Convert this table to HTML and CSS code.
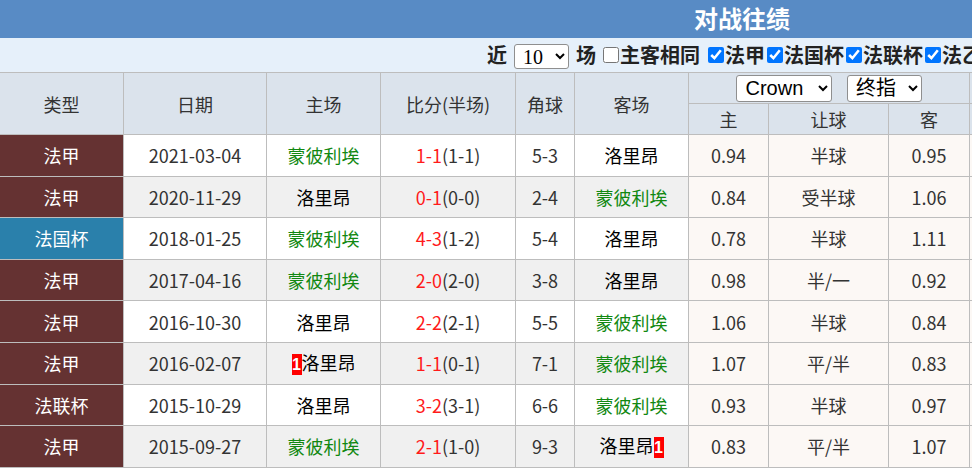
FILE: index.html
```html
<!DOCTYPE html>
<html lang="zh-CN">
<head>
<meta charset="utf-8">
<title>对战往绩</title>
<link rel="stylesheet" href="styles.css">
</head>
<body>
<div class="page">
  <div class="title-bar">对战往绩</div>
  <div class="filter-bar">
    <span class="ftxt">近</span>
    <select class="sel-num"><option>10</option></select>
    <span class="ftxt">场</span>
    <label class="chk"><input type="checkbox">主客相同</label>
    <label class="chk gap"><input type="checkbox" checked>法甲</label>
    <label class="chk"><input type="checkbox" checked>法国杯</label>
    <label class="chk"><input type="checkbox" checked>法联杯</label>
    <label class="chk"><input type="checkbox" checked>法乙</label>
  </div>
  <table class="h2h">
    <colgroup>
      <col class="c-type"><col class="c-date"><col class="c-home"><col class="c-score"><col class="c-corner"><col class="c-away">
      <col class="c-o1"><col class="c-o2"><col class="c-o3">
      <col class="c-o1"><col class="c-o2"><col class="c-o3">
    </colgroup>
    <thead>
      <tr class="hr1">
        <th rowspan="2">类型</th>
        <th rowspan="2">日期</th>
        <th rowspan="2">主场</th>
        <th rowspan="2">比分(半场)</th>
        <th rowspan="2">角球</th>
        <th rowspan="2">客场</th>
        <th colspan="3" class="selcell">
          <select class="sel-co"><option>Crown</option></select>
          <select class="sel-kind"><option>终指</option></select>
        </th>
        <th colspan="3" class="selcell">
          <select class="sel-kind"><option>终指</option></select>
        </th>
      </tr>
      <tr class="hr2">
        <th>主</th><th>让球</th><th>客</th>
        <th>大</th><th>盘口</th><th>小</th>
      </tr>
    </thead>
    <tbody>
      <tr class="odd">
        <td class="lg">法甲</td><td>2021-03-04</td><td class="g">蒙彼利埃</td>
        <td><span class="r">1-1</span>(1-1)</td><td>5-3</td><td class="b">洛里昂</td>
        <td class="o">0.94</td><td class="o">半球</td><td class="o">0.95</td>
        <td class="o">0.90</td><td class="o">2.5</td><td class="o">0.96</td>
      </tr>
      <tr class="even">
        <td class="lg">法甲</td><td>2020-11-29</td><td class="b">洛里昂</td>
        <td><span class="r">0-1</span>(0-0)</td><td>2-4</td><td class="g">蒙彼利埃</td>
        <td class="o">0.84</td><td class="o">受半球</td><td class="o">1.06</td>
        <td class="o">0.95</td><td class="o">2.5</td><td class="o">0.91</td>
      </tr>
      <tr class="odd">
        <td class="lg cup">法国杯</td><td>2018-01-25</td><td class="g">蒙彼利埃</td>
        <td><span class="r">4-3</span>(1-2)</td><td>5-4</td><td class="b">洛里昂</td>
        <td class="o">0.78</td><td class="o">半球</td><td class="o">1.11</td>
        <td class="o">0.88</td><td class="o">2.5</td><td class="o">0.98</td>
      </tr>
      <tr class="even">
        <td class="lg">法甲</td><td>2017-04-16</td><td class="g">蒙彼利埃</td>
        <td><span class="r">2-0</span>(2-0)</td><td>3-8</td><td class="b">洛里昂</td>
        <td class="o">0.98</td><td class="o">半/一</td><td class="o">0.92</td>
        <td class="o">0.93</td><td class="o">2.5</td><td class="o">0.93</td>
      </tr>
      <tr class="odd">
        <td class="lg">法甲</td><td>2016-10-30</td><td class="b">洛里昂</td>
        <td><span class="r">2-2</span>(2-1)</td><td>5-5</td><td class="g">蒙彼利埃</td>
        <td class="o">1.06</td><td class="o">半球</td><td class="o">0.84</td>
        <td class="o">0.86</td><td class="o">2.5</td><td class="o">1.00</td>
      </tr>
      <tr class="even">
        <td class="lg">法甲</td><td>2016-02-07</td><td class="b"><span class="card">1</span>洛里昂</td>
        <td><span class="r">1-1</span>(0-1)</td><td>7-1</td><td class="g">蒙彼利埃</td>
        <td class="o">1.07</td><td class="o">平/半</td><td class="o">0.83</td>
        <td class="o">0.97</td><td class="o">2.5</td><td class="o">0.89</td>
      </tr>
      <tr class="odd">
        <td class="lg">法联杯</td><td>2015-10-29</td><td class="b">洛里昂</td>
        <td><span class="r">3-2</span>(3-1)</td><td>6-6</td><td class="g">蒙彼利埃</td>
        <td class="o">0.93</td><td class="o">半球</td><td class="o">0.97</td>
        <td class="o">0.92</td><td class="o">2.5</td><td class="o">0.94</td>
      </tr>
      <tr class="even">
        <td class="lg">法甲</td><td>2015-09-27</td><td class="g">蒙彼利埃</td>
        <td><span class="r">2-1</span>(1-0)</td><td>9-3</td><td class="b">洛里昂<span class="card">1</span></td>
        <td class="o">0.83</td><td class="o">平/半</td><td class="o">1.07</td>
        <td class="o">0.90</td><td class="o">2.5</td><td class="o">0.96</td>
      </tr>
    </tbody>
  </table>
</div>
</body>
</html>
```

FILE: styles.css
```css
html, body {
  margin: 0;
  padding: 0;
  overflow: hidden;
  background: #ffffff;
}

.page {
  width: 1484px;
  font-family: "Noto Sans CJK SC", "Noto Sans", sans-serif;
  color: #333333;
}

.title-bar {
  height: 38px;
  background: #588bc5;
  color: #ffffff;
  font-size: 24px;
  font-weight: bold;
  line-height: 36px;
  text-align: center;
}

.filter-bar {
  height: 34px;
  background: #e6f0fa;
  display: flex;
  align-items: center;
  padding-left: 487px;
  font-size: 20px;
  font-weight: bold;
  color: #222222;
  white-space: nowrap;
  line-height: 24px;
}

.ftxt {
  display: inline-block;
}

.sel-num {
  width: 55px;
  height: 25px;
  margin: 2px 7px 0 7px;
  font-family: "Liberation Serif", serif;
  font-size: 20px;
  padding: 0 0 0 4px;
  background: #ffffff;
  border: 1px solid #8f8f8f;
  border-radius: 3px;
  color: #000;
}

.chk {
  display: inline-flex;
  align-items: center;
}

.chk input {
  width: 16px;
  height: 16px;
  margin: 0 1px 0 7px;
}

.chk + .chk input {
  margin-left: 2px;
}

.chk.gap input {
  margin-left: 8px;
}

.h2h {
  border-collapse: collapse;
  table-layout: fixed;
  width: 1251px;
  margin-left: -1px;
  font-size: 18px;
}

.c-type { width: 124px; }
.c-date { width: 143px; }
.c-home { width: 114px; }
.c-score { width: 135px; }
.c-corner { width: 59px; }
.c-away { width: 114px; }
.c-o1 { width: 80px; }
.c-o2 { width: 120px; }
.c-o3 { width: 81px; }

.h2h th, .h2h td {
  border: 1px solid #bdbdbd;
  text-align: center;
  vertical-align: middle;
  padding: 0;
  white-space: nowrap;
  overflow: hidden;
  line-height: 22px;
}

.h2h th {
  background: #dbe3ec;
  font-weight: normal;
  color: #333333;
}

.hr1 th { height: 30px; }
.hr2 th { height: 30px; }

.selcell select {
  height: 27px;
  font-family: "Liberation Sans", sans-serif;
  font-size: 20px;
  background: #ffffff;
  border: 1px solid #8f8f8f;
  border-radius: 3px;
  color: #000;
  margin: 0 5px;
  padding: 0 0 0 4px;
  vertical-align: middle;
}

.sel-co { width: 96px; }
.sel-kind { width: 75px; font-family: "Noto Sans CJK SC", sans-serif; }

.h2h td {
  height: 40.6px;
  color: #333333;
}

.odd td { background: #ffffff; }
.even td { background: #f0f0f0; }
.h2h td.o { background: #fcf8f5; }

.h2h td.lg {
  background: #653232;
  color: #ffffff;
}

.h2h td.lg.cup {
  background: #2a80ab;
}

.h2h td.g { color: #118811; }
.h2h td.b { color: #000000; }

.r { color: #ff1a1a; }

.card {
  display: inline-block;
  background: #ff0000;
  color: #ffffff;
  font-weight: bold;
  font-family: "Liberation Sans", sans-serif;
  font-size: 16px;
  width: 10px;
  height: 21px;
  line-height: 21px;
  vertical-align: 0;
}
```
